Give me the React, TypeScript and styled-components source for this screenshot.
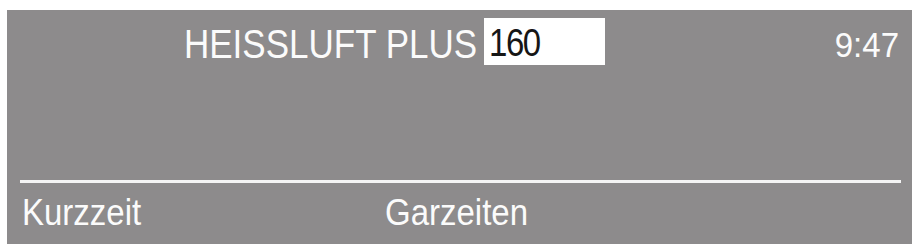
import styled, { createGlobalStyle } from 'styled-components';

const GlobalStyle = createGlobalStyle`
  html, body {
    margin: 0;
    padding: 0;
    background: #ffffff;
  }
  body {
    font-family: "Liberation Sans", Arial, sans-serif;
  }
`;

export default function App() {
  return <>
    <GlobalStyle />
    <Screen>
      <TopBar>
        <Mode>HEISSLUFT PLUS</Mode>
        <ValueBox><Digits>160</Digits></ValueBox>
        <Clock>9:47</Clock>
      </TopBar>
      <Spacer />
      <Divider />
      <SoftKeys>
        <SoftKey>Kurzzeit</SoftKey>
        <SoftKey>Garzeiten</SoftKey>
      </SoftKeys>
    </Screen>
  </>;
}

const Screen = styled.div`
  margin: 10px 0 0 7px;
  width: 905px;
  height: 234px;
  background: #8d8b8c;
  display: flex;
  flex-direction: column;
  color: #fbfbfb;
`;

const TopBar = styled.div`
  display: flex;
  align-items: flex-start;
  padding: 8px 13px 0 177px;
  height: 47px;
`;

// the LCD glyphs are taller and narrower than Arial's
const Mode = styled.span`
  display: inline-block;
  font-size: 35px;
  line-height: 47px;
  padding-top: 4px;
  white-space: nowrap;
  transform: scaleY(1.16);
  transform-origin: 50% 80%;
`;

const ValueBox = styled.span`
  margin-left: 7px;
  width: 121px;
  height: 47px;
  padding: 4px 0 0 5px;
  box-sizing: border-box;
  background: #ffffff;
  color: #161616;
`;

const Digits = styled.span`
  display: inline-block;
  font-size: 33px;
  line-height: 47px;
  letter-spacing: -1.5px;
  transform: scaleY(1.2);
  transform-origin: 50% 80%;
`;

const Clock = styled.span`
  display: inline-block;
  margin-left: auto;
  font-size: 33px;
  line-height: 47px;
  padding-top: 4px;
  transform: scaleY(1.06);
  transform-origin: 50% 80%;
`;

const Spacer = styled.div`
  flex: 1;
`;

const Divider = styled.div`
  height: 3px;
  margin: 0 11px 0 13px;
  background: #f4f4f4;
`;

const SoftKeys = styled.div`
  display: grid;
  grid-template-columns: 363px 1fr;
  padding: 0 0 0 15px;
  height: 61px;
  align-items: center;
`;

const SoftKey = styled.span`
  display: inline-block;
  justify-self: start;
  font-size: 33px;
  line-height: 40px;
  transform: scaleY(1.12);
  transform-origin: 50% 80%;
`;
